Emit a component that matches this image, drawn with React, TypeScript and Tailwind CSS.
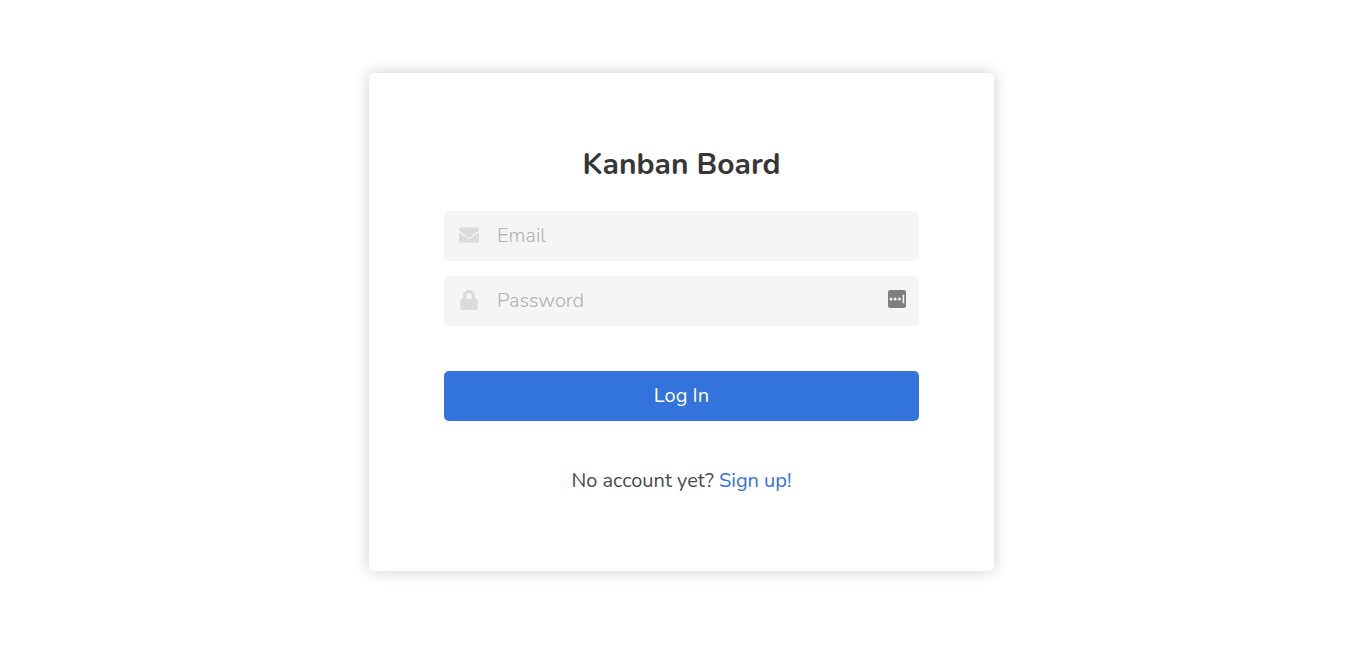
import React from "react";
import { FaEnvelope, FaLock } from "react-icons/fa";

function PasswordManagerIcon() {
  return (
    <svg viewBox="0 0 18 18" className="mb-0.5 size-[18px]" aria-hidden="true">
      <rect width="18" height="18" rx="2" fill="#7f7f7f" />
      <circle cx="3" cy="9" r="1.5" fill="#f4f4f4" />
      <circle cx="7.2" cy="9" r="1.5" fill="#f4f4f4" />
      <circle cx="11.4" cy="9" r="1.5" fill="#f4f4f4" />
      <rect x="14.6" y="4.7" width="1.6" height="8.6" fill="#f4f4f4" />
    </svg>
  );
}

type FieldProps = {
  id: string;
  type: string;
  label: string;
  icon: React.ReactNode;
  action?: React.ReactNode;
};

function Field({ id, type, label, icon, action }: FieldProps) {
  return (
    <div className="flex h-[50px] items-center rounded-[5px] bg-[#f5f5f5] pr-[13px] pb-0.5">
      <label
        htmlFor={id}
        aria-label={label}
        className="flex w-[50px] shrink-0 justify-center text-[#dbdbdb]"
      >
        {icon}
      </label>
      <input
        id={id}
        type={type}
        placeholder={label}
        className="h-full min-w-0 flex-1 bg-transparent pl-[3px] font-light text-[#363636] outline-none placeholder:text-[#b0b0b0]"
      />
      {action}
    </div>
  );
}

export default function App() {
  return (
    <main className="flex min-h-screen items-center justify-center bg-white pr-px pb-px font-['Nunito','Lato',sans-serif] text-[20px] leading-[30px] text-[#4a4a4a]">
      <form
        className="flex w-full max-w-[625px] flex-col rounded-[5px] bg-white p-[75px] shadow-[0_0_15px_rgba(0,0,0,0.2)]"
        onSubmit={(event) => event.preventDefault()}
      >
        <h1 className="mb-[30px] text-center text-[30px] leading-[33px] font-bold text-[#363636]">
          Kanban Board
        </h1>
        <div className="flex flex-col gap-[15px]">
          <Field id="email" type="email" label="Email" icon={<FaEnvelope className="size-5" />} />
          <Field
            id="password"
            type="password"
            label="Password"
            icon={<FaLock className="size-5" />}
            action={<PasswordManagerIcon />}
          />
        </div>
        <button
          type="submit"
          className="mt-[45px] h-[50px] rounded-[5px] bg-[#3273dc] text-white"
        >
          Log In
        </button>
        <p className="mt-[45px] text-center">
          No account yet?{" "}
          <a href="#signup" className="text-[#3273dc]">
            Sign up!
          </a>
        </p>
      </form>
    </main>
  );
}
